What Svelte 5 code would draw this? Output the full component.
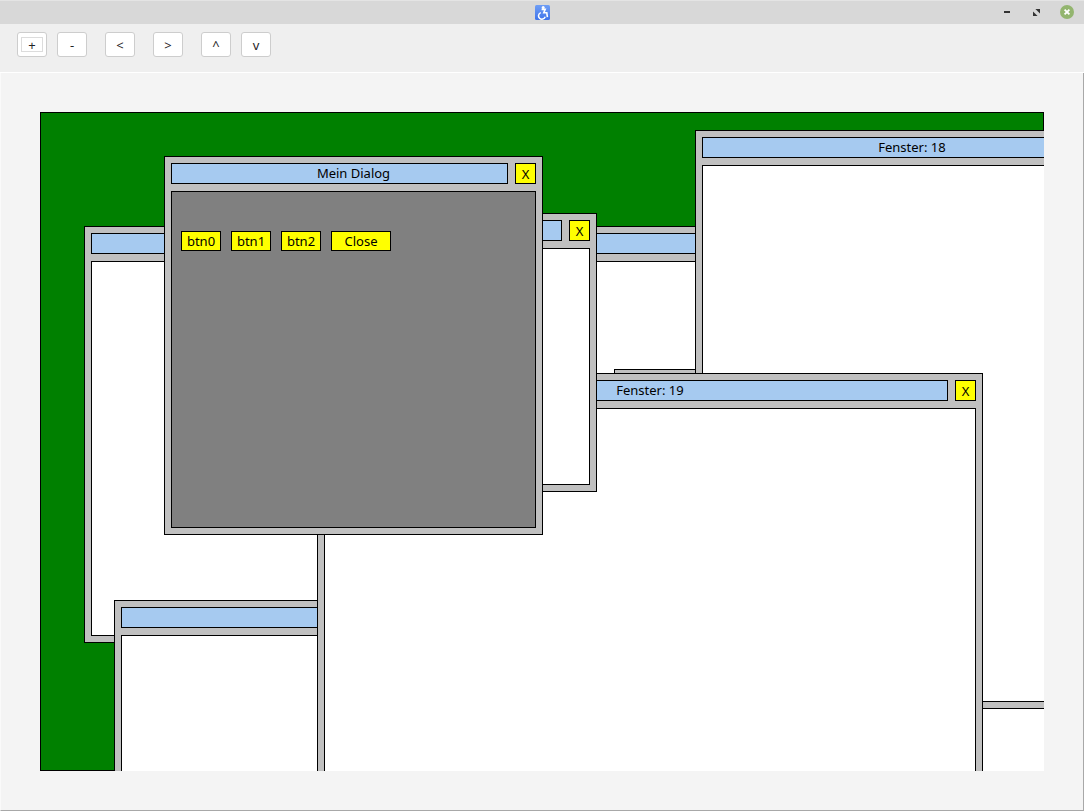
<script>
  // z-order is array order, coordinates are relative to the canvas
  const windows = [
    { title: '', x: 44, y: 114, w: 700, h: 417 },
    { title: '', x: 574, y: 257, w: 600, h: 600 },
    { title: 'Fenster: 18', x: 655, y: 18, w: 434, h: 579 },
    { title: '', x: 74, y: 488, w: 500, h: 400 },
    { title: 'Fenster: 19', x: 277, y: 261, w: 666, h: 600 },
    { title: '', x: 178, y: 101, w: 379, h: 279 }
  ];

  const toolGroups = [['+', '-'], ['<'], ['>'], ['^', 'v']];
  const dialogButtons = ['btn0', 'btn1', 'btn2'];
</script>

<div class="app">
  <header class="titlebar">
    <svg class="app-icon" viewBox="0 0 15 15" width="15" height="15" aria-hidden="true">
      <defs>
        <linearGradient id="blue" x1="0" y1="0" x2="0" y2="1">
          <stop offset="0" stop-color="#6f9ef5" />
          <stop offset="1" stop-color="#3f74ea" />
        </linearGradient>
      </defs>
      <rect width="15" height="15" rx="1.5" fill="url(#blue)" />
      <circle cx="8.2" cy="2.4" r="1.5" fill="#fff" />
      <path d="M6.6 4.4h3.6l-1.4 3.4h3l.6 4.4" fill="none" stroke="#fff" stroke-width="1.6" />
      <path d="M5.8 7.6a3.4 3.4 0 1 0 4.4 4.2" fill="none" stroke="#fff" stroke-width="1.5" />
    </svg>
    <div class="controls">
      <span class="minimize"></span>
      <svg class="restore" viewBox="0 0 7 7" width="7" height="7" aria-hidden="true">
        <path d="M2.4 0H7v4.6zM0 2.4L4.6 7H0z" fill="#333" />
      </svg>
      <svg class="close-wm" viewBox="0 0 14 14" width="14" height="14" aria-hidden="true">
        <circle cx="7" cy="7" r="7" fill="#93b56f" />
        <path d="M4.6 4.6l4.8 4.8M9.4 4.6l-4.8 4.8" stroke="#fff" stroke-width="1.8" />
      </svg>
    </div>
  </header>

  <nav class="toolbar">
    {#each toolGroups as group}
      <div class="tool-group">
        {#each group as label}
          <button class="tool" class:focused={label === '+'}><span>{label}</span></button>
        {/each}
      </div>
    {/each}
  </nav>

  <main class="main">
    <div class="viewport">
      <div class="canvas"></div>

      {#each windows as win}
        <section class="win" style="left: {win.x}px; top: {win.y}px; width: {win.w}px; height: {win.h}px;">
          <div class="head">
            <div class="title">{win.title}</div>
            <button class="close">X</button>
          </div>
          <div class="body"></div>
        </section>
      {/each}

      <section class="win dialog">
        <div class="head">
          <div class="title">Mein Dialog</div>
          <button class="close">X</button>
        </div>
        <div class="body dialog-body">
          {#each dialogButtons as label}
            <button class="dlg-btn">{label}</button>
          {/each}
          <button class="dlg-btn wide">Close</button>
        </div>
      </section>
    </div>
  </main>
</div>

<style>
  :global(body) {
    margin: 0;
    font-family: "Noto Sans", "Open Sans", sans-serif;
  }

  .app {
    width: 1084px;
    height: 811px;
    display: flex;
    flex-direction: column;
    overflow: hidden;
  }

  .titlebar {
    position: relative;
    height: 24px;
    box-sizing: border-box;
    flex: none;
    display: flex;
    align-items: center;
    justify-content: center;
    background: #d8d8d8;
    border-top: 1px solid #e4e4e4;
  }

  .app-icon {
    margin-left: 1px;
  }

  .controls {
    position: absolute;
    right: 10px;
    top: 4px;
    display: flex;
    align-items: center;
    height: 14px;
  }

  .minimize {
    width: 6px;
    height: 2px;
    background: #333;
    margin-right: 23px;
  }

  .restore {
    margin-right: 20px;
  }

  .toolbar {
    height: 49px;
    flex: none;
    box-sizing: border-box;
    display: flex;
    gap: 18px;
    padding: 8px 0 0 17px;
    background: #efefef;
    border-bottom: 1px solid #fff;
  }

  .tool-group {
    display: flex;
    gap: 10px;
  }

  .tool {
    width: 30px;
    height: 25px;
    padding: 4px 3px;
    display: flex;
    background: #fff;
    border: 1px solid #cdcdcd;
    border-radius: 3px;
    font: 13px "Noto Sans", sans-serif;
    color: #1f2426;
  }

  .tool span {
    flex: 1;
    display: flex;
    align-items: center;
    justify-content: center;
    border: 1px solid transparent;
  }

  .tool.focused span {
    border-color: #dcdcdc;
  }

  .main {
    flex: 1;
    box-sizing: border-box;
    padding: 39px;
    background: #f4f4f4;
    border-left: 1px solid #fafafa;
    border-right: 1px solid #a8a8a8;
    border-bottom: 1px solid #a8a8a8;
  }

  .viewport {
    position: relative;
    width: 1004px;
    height: 659px;
    overflow: hidden;
  }

  .canvas {
    height: 100%;
    box-sizing: border-box;
    background: #008000;
    border: 1px solid #000;
  }

  .win {
    position: absolute;
    box-sizing: border-box;
    display: flex;
    flex-direction: column;
    gap: 7px;
    padding: 6px;
    background: #c0c0c0;
    border: 1px solid #000;
  }

  .dialog {
    left: 124px;
    top: 44px;
    width: 379px;
    height: 379px;
  }

  .head {
    display: flex;
    gap: 7px;
    flex: none;
    height: 21px;
  }

  .title {
    flex: 1;
    box-sizing: border-box;
    padding-left: 28px;
    line-height: 19px;
    text-align: center;
    font-size: 13px;
    color: #000;
    background: #a6caf0;
    border: 1px solid #000;
    white-space: nowrap;
  }

  .close {
    width: 21px;
    height: 21px;
    padding: 0;
    background: #ff0;
    border: 1px solid #000;
    font: 13px "Noto Sans", sans-serif;
    color: #000;
  }

  .body {
    flex: 1;
    background: #fff;
    border: 1px solid #000;
  }

  .dialog-body {
    display: flex;
    align-items: flex-start;
    gap: 10px;
    padding: 39px 9px 0;
    background: #808080;
  }

  .dlg-btn {
    width: 40px;
    height: 20px;
    padding: 0;
    background: #ff0;
    border: 1px solid #000;
    font: 13px "Noto Sans", sans-serif;
    color: #000;
  }

  .dlg-btn.wide {
    width: 60px;
  }
</style>
